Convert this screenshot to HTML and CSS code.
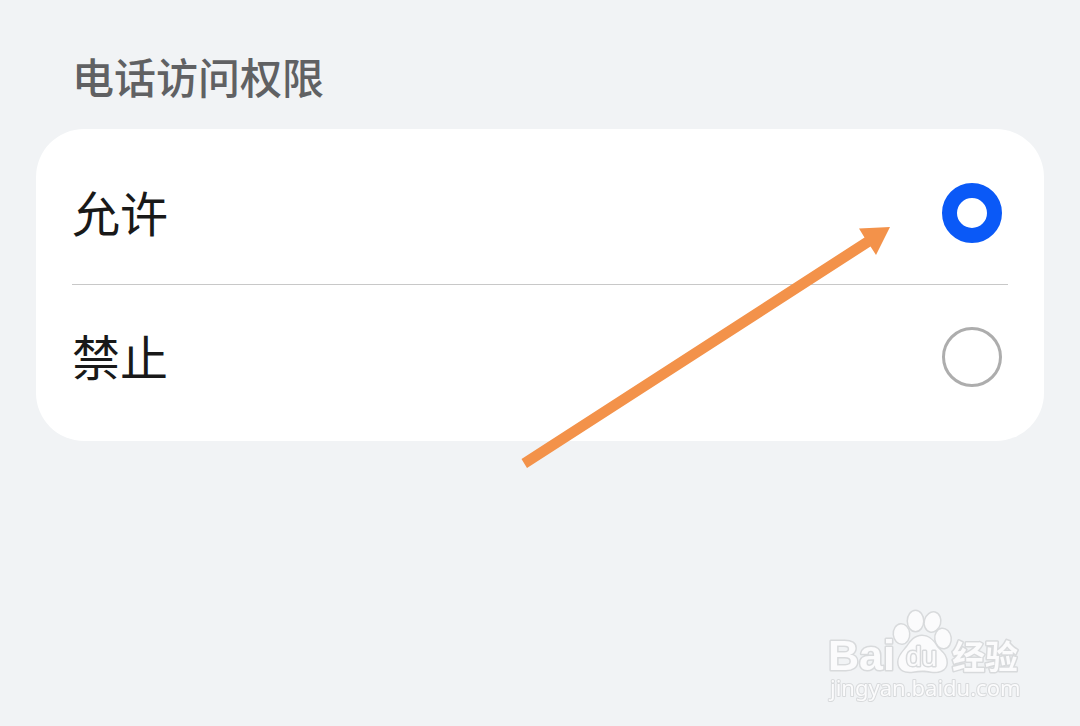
FILE: index.html
```html
<!DOCTYPE html>
<html lang="zh-CN">
<head>
	<meta charset="utf-8">
	<title>电话访问权限</title>
	<meta name="viewport" content="width=device-width, initial-scale=1.0">
	<link rel="stylesheet" href="styles.css">
</head>
<body>
	<main>
		<h1 id="title">电话访问权限</h1>
		<form class="card" role="radiogroup" aria-labelledby="title">
			<label class="row">
				<span>允许</span>
				<input type="radio" name="phone" value="allow" checked>
			</label>
			<label class="row">
				<span>禁止</span>
				<input type="radio" name="phone" value="deny">
			</label>
			<svg class="arrow" width="370" height="244" viewBox="0 0 370 244" aria-hidden="true">
				<path d="M1.5 233 344.5 11.5 339 2.5 370 1 356 29 350.5 20.5 7 242Z"/>
			</svg>
		</form>
	</main>

	<svg class="watermark" width="200" height="100" viewBox="0 0 200 100" role="img" aria-label="Baidu 经验">
		<text class="latin" x="3" y="64" font-size="43">Bai</text>
		<!-- paw -->
		<ellipse cx="76.5" cy="28" rx="7.5" ry="9.5" transform="rotate(-5 76.5 28)"/>
		<ellipse cx="90.5" cy="15" rx="7.5" ry="10"/>
		<ellipse cx="107.5" cy="16" rx="7.5" ry="9.5" transform="rotate(15 107.5 16)"/>
		<ellipse cx="118" cy="32.5" rx="7.5" ry="9.5" transform="rotate(-8 118 32.5)"/>
		<path d="M97 30C104 30 108 34 112 41C116 46 121.5 48 121.5 57C121 65 113 66.5 106 65.5C99 64 94 64.5 88 65.5C80 66.5 73.5 64 73.5 56C73.5 50 78 46 82 41C86 35 90 30 97 30Z"/>
		<text class="latin du" x="81" y="60" font-size="28">du</text>
		<text class="cjk" x="127" y="63" font-size="33">经验</text>
		<text class="url" x="5" y="90" font-size="22">jingyan.baidu.com</text>
	</svg>
</body>
</html>
```

FILE: styles.css
```css
* { box-sizing: border-box; }

body {
	margin: 0;
	min-height: 100vh;
	background: #f1f3f5;
	color: #191919;
	font-family: "Noto Sans CJK SC", sans-serif;
}

main { padding: 46px 36px; }

h1 {
	margin: 0 0 23px;
	padding: 0 36px;
	color: #606163;
	font-size: 42px;
	font-weight: 500;
	line-height: 60px;
}

.card {
	position: relative;
	padding: 12px 36px;
	border-radius: 48px;
	background: #fff;
}

.row {
	display: flex;
	align-items: center;
	justify-content: space-between;
	height: 144px;
	padding-right: 6px;
	font-size: 48px;
	line-height: 72px;
	cursor: pointer;
}
.row span { padding-bottom: 4px; }

.row:first-child {
	background: linear-gradient(#c8c8c8, #c8c8c8) bottom / 100% 1px no-repeat;
}

input[type=radio] {
	appearance: none;
	width: 60px;
	height: 60px;
	margin: 0;
	border: 3px solid #adadad;
	border-radius: 50%;
	background: #fff;
	cursor: pointer;
}
input[type=radio]:checked { border: 15px solid #0a59f7; }

.arrow {
	position: absolute;
	top: 97px;
	right: 154px;
	fill: #f3924a;
	pointer-events: none;
}

.watermark {
	position: fixed;
	right: 55px;
	bottom: 20px;
	fill: #fbfbfc;
	stroke: #d8dadc;
	stroke-width: 3px;
	paint-order: stroke;
}
.watermark text { stroke-linejoin: round; }
.latin { font-family: "Liberation Sans", Arial, sans-serif; font-weight: bold; }
.du { font-weight: normal; }
.cjk { font-family: "Noto Sans CJK SC", sans-serif; font-weight: bold; }
.url { font-family: "Noto Sans", sans-serif; stroke-width: 2px; }
```
